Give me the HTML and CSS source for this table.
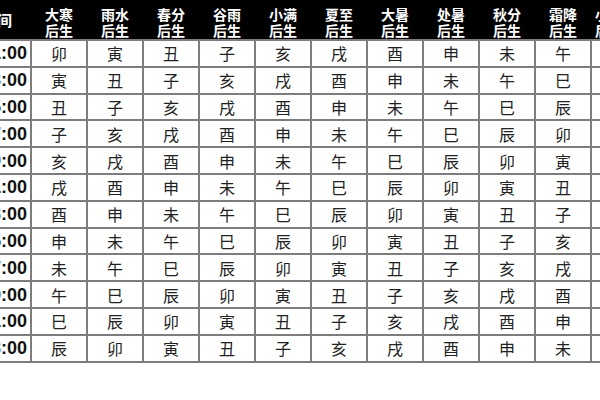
FILE: index.html
```html
<!DOCTYPE html>
<html lang="zh">
<head>
<meta charset="utf-8">
<link rel="stylesheet" href="styles.css">
</head>
<body>
<div class="frame">
<table class="chart">
<colgroup>
<col><col><col><col><col><col><col><col><col><col><col><col class="c-last">
</colgroup>
<thead>
<tr>
<th class="time-h">时间</th>
<th>大寒<br>后生</th><th>雨水<br>后生</th><th>春分<br>后生</th><th>谷雨<br>后生</th><th>小满<br>后生</th><th>夏至<br>后生</th><th>大暑<br>后生</th><th>处暑<br>后生</th><th>秋分<br>后生</th><th>霜降<br>后生</th><th>小雪<br>后生</th>
</tr>
</thead>
<tbody>
<tr><td class="time">01:00</td><td>卯</td><td>寅</td><td>丑</td><td>子</td><td>亥</td><td>戌</td><td>酉</td><td>申</td><td>未</td><td>午</td><td>巳</td></tr>
<tr><td class="time">03:00</td><td>寅</td><td>丑</td><td>子</td><td>亥</td><td>戌</td><td>酉</td><td>申</td><td>未</td><td>午</td><td>巳</td><td>辰</td></tr>
<tr><td class="time">05:00</td><td>丑</td><td>子</td><td>亥</td><td>戌</td><td>酉</td><td>申</td><td>未</td><td>午</td><td>巳</td><td>辰</td><td>卯</td></tr>
<tr><td class="time">07:00</td><td>子</td><td>亥</td><td>戌</td><td>酉</td><td>申</td><td>未</td><td>午</td><td>巳</td><td>辰</td><td>卯</td><td>寅</td></tr>
<tr><td class="time">09:00</td><td>亥</td><td>戌</td><td>酉</td><td>申</td><td>未</td><td>午</td><td>巳</td><td>辰</td><td>卯</td><td>寅</td><td>丑</td></tr>
<tr><td class="time">11:00</td><td>戌</td><td>酉</td><td>申</td><td>未</td><td>午</td><td>巳</td><td>辰</td><td>卯</td><td>寅</td><td>丑</td><td>子</td></tr>
<tr><td class="time">13:00</td><td>酉</td><td>申</td><td>未</td><td>午</td><td>巳</td><td>辰</td><td>卯</td><td>寅</td><td>丑</td><td>子</td><td>亥</td></tr>
<tr><td class="time">15:00</td><td>申</td><td>未</td><td>午</td><td>巳</td><td>辰</td><td>卯</td><td>寅</td><td>丑</td><td>子</td><td>亥</td><td>戌</td></tr>
<tr><td class="time">17:00</td><td>未</td><td>午</td><td>巳</td><td>辰</td><td>卯</td><td>寅</td><td>丑</td><td>子</td><td>亥</td><td>戌</td><td>酉</td></tr>
<tr><td class="time">19:00</td><td>午</td><td>巳</td><td>辰</td><td>卯</td><td>寅</td><td>丑</td><td>子</td><td>亥</td><td>戌</td><td>酉</td><td>申</td></tr>
<tr><td class="time">21:00</td><td>巳</td><td>辰</td><td>卯</td><td>寅</td><td>丑</td><td>子</td><td>亥</td><td>戌</td><td>酉</td><td>申</td><td>未</td></tr>
<tr><td class="time">23:00</td><td>辰</td><td>卯</td><td>寅</td><td>丑</td><td>子</td><td>亥</td><td>戌</td><td>酉</td><td>申</td><td>未</td><td>午</td></tr>
</tbody>
</table>
</div>
</body>
</html>
```
FILE: styles.css
```css
html, body {
  margin: 0;
  padding: 0;
  background: #ffffff;
}
body {
  width: 600px;
  height: 400px;
  overflow: hidden;
  font-family: "Noto Sans CJK SC", "Noto Sans", sans-serif;
}
.frame {
  width: 600px;
  height: 400px;
  overflow: hidden;
}
.chart {
  margin-left: -25px;
  border-collapse: collapse;
  table-layout: fixed;
  width: 652px;
}
.chart col {
  width: 56px;
}
.chart col.c-last {
  width: 36px;
}
.chart thead tr {
  height: 40px;
  background: #000000;
}
.chart th {
  color: #ffffff;
  font-weight: 700;
  font-size: 14px;
  line-height: 16px;
  padding: 4px 0 0 0;
  text-align: center;
  vertical-align: middle;
  border: 0;
}
.chart th.time-h {
  text-align: right;
  padding: 0 19px 0 0;
  font-size: 15px;
}
.chart tbody tr {
  height: 26.8px;
}
.chart td {
  border: 2px solid #7d7d7d;
  text-align: center;
  vertical-align: middle;
  font-size: 16px;
  color: #222222;
  padding: 0;
  line-height: 20px;
}
.chart td.time {
  font-family: "Liberation Sans", Arial, sans-serif;
  font-weight: 700;
  font-size: 18px;
  text-align: right;
  padding-right: 3px;
  color: #111111;
  border-left: 0;
}
```
